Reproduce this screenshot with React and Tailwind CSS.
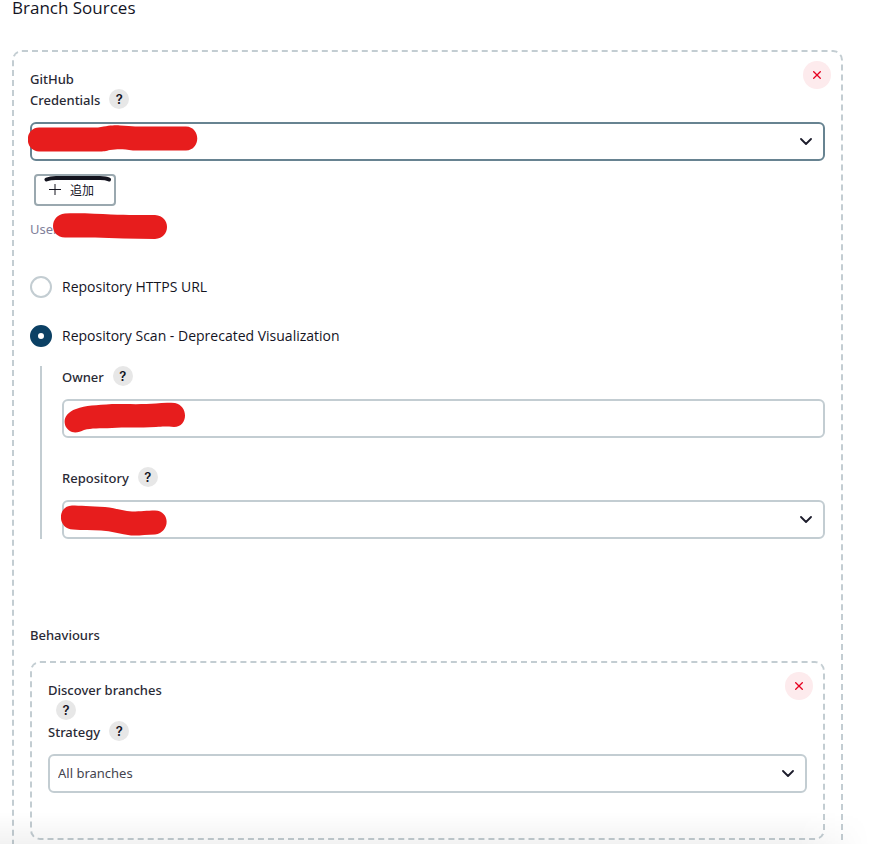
import React from "react";

const BOX = "relative rounded-[10px] border-2 border-dashed border-[#c3cdd2]";
const FIELD =
  "block h-[39px] w-full appearance-none rounded-md border-2 bg-white px-2 text-[13px] font-normal text-[#44444f] outline-none";

function Help({ topic }) {
  return (
    <button
      type="button"
      aria-label={`Help for ${topic}`}
      className="flex size-5 shrink-0 items-center justify-center rounded-full bg-[#e7e7e7] font-['Inter',sans-serif] text-[13px] leading-5 font-semibold text-[#14141f]"
    >
      ?
    </button>
  );
}

function Label({ htmlFor, children }) {
  return (
    <div className="-mt-px flex h-[22px] items-start gap-[9px]">
      <label htmlFor={htmlFor} className="leading-[23px]">
        {children}
      </label>
      <Help topic={children} />
    </div>
  );
}

function Remove({ label }) {
  return (
    <button
      type="button"
      aria-label={label}
      className="absolute top-[9px] right-[10px] flex size-7 items-center justify-center rounded-full bg-[#fdebed] text-[#e6001f]"
    >
      <svg viewBox="0 0 8 8" className="size-2" fill="none" stroke="currentColor" strokeWidth="1.3">
        <path d="M0.3 0.3 7.7 7.7M7.7 0.3 0.3 7.7" />
      </svg>
    </button>
  );
}

function Select({ id, border, children, value }) {
  return (
    <div className="relative">
      <select id={id} defaultValue={value} className={`${FIELD} ${border}`}>
        <option value={value}>{value}</option>
      </select>
      <svg
        viewBox="0 0 12 8"
        className="pointer-events-none absolute top-4 right-[13px] h-2 w-3"
        fill="none"
        stroke="#1c1c2b"
        strokeWidth="1.8"
        strokeLinecap="round"
        strokeLinejoin="round"
      >
        <path d="M1 1 6 6 11 1" />
      </svg>
      {children}
    </div>
  );
}

function Scribble({ d, className }) {
  return (
    <svg
      viewBox="0 0 180 40"
      className={`pointer-events-none absolute h-10 w-[180px] ${className}`}
      fill="#e71d1d"
      aria-hidden="true"
    >
      <path d={d} />
    </svg>
  );
}

const RADIO =
  "size-[22px] shrink-0 appearance-none rounded-full border-2 border-[#c3cdd2] bg-white checked:border-8 checked:border-[#0b4064]";
const RADIO_LABEL = "font-['Open_Sans',sans-serif] text-sm font-normal text-[#14141f]";

export default function App() {
  return (
    <main className="relative h-screen overflow-hidden bg-white pr-[45px] pl-3 font-['Noto_Sans','Noto_Sans_CJK_JP',sans-serif] text-[13px] font-medium text-[#2a2a35]">
      <h1 className="mb-[34px] font-['Open_Sans',sans-serif] text-[17px] leading-4 font-medium text-[#14141f]">
        Branch Sources
      </h1>

      <section className={`${BOX} px-4 pt-[17px] pb-12`}>
        <Remove label="Remove GitHub source" />
        <h2 className="leading-[21px]">GitHub</h2>
        <Label htmlFor="credentials">Credentials</Label>
        <div className="mt-[11px]">
          <Select id="credentials" border="border-[#678391]" value="">
            <Scribble
              className="top-0 left-[-2px]"
              d="M11 5.5H70C80 4 85 3 92 3.5C105 4.5 110 4.500 120 4.500H158C173 5 173 28 158 28.500H105C95 27 90 27 82 28C78 29 76 29.500 70 29.500H11C-4 29-4 6 11 5.500Z"
            />
          </Select>
        </div>

        <button
          type="button"
          className="relative mt-[13px] ml-1 flex h-8 w-[82px] items-center gap-[9px] rounded border-2 border-[#9aa8af] pl-[13px] font-['Noto_Sans_CJK_JP',sans-serif] text-xs font-normal text-[#14141f]"
        >
          <svg viewBox="0 0 12 12" className="size-3" stroke="currentColor" strokeWidth="1">
            <path d="M0 5.500H12M6 0V11" />
          </svg>
          追加
          <svg
            viewBox="0 0 68 8"
            className="absolute top-[-1px] left-[8px] h-2 w-[68px]"
            fill="none"
            stroke="#14141f"
            strokeWidth="4"
            strokeLinecap="round"
            aria-hidden="true"
          >
            <path d="M2.500 4.500C5 3.500 8 3 12 3H56C60 3 63 3.500 65 4.500" />
          </svg>
        </button>

        <p className="relative mt-[13px] text-[13px] leading-[21px] font-normal text-[#80809a]">
          User
          <Scribble
            className="top-[-6px] left-[23px]"
            d="M12 0.500C30 0 45 1 58 1.500C75 2 90 2 102 2C118 3 118 25 102 26C80 26 60 25 42 24.500H12C-4 24-4 2 12 0.500Z"
          />
        </p>

        <fieldset className="mt-9">
          <div className="flex h-[22px] items-center gap-[10px]">
            <input id="https-url" type="radio" name="repository-mode" className={RADIO} />
            <label htmlFor="https-url" className={RADIO_LABEL}>
              Repository HTTPS URL
            </label>
          </div>
          <div className="mt-[27px] flex h-[22px] items-center gap-[10px]">
            <input id="scan" type="radio" name="repository-mode" defaultChecked className={RADIO} />
            <label htmlFor="scan" className={RADIO_LABEL}>
              Repository Scan - Deprecated Visualization
            </label>
          </div>

          <div className="mt-[19px] ml-[10px] border-l-2 border-[#c3cdd2] pt-px pl-5">
            <Label htmlFor="owner">Owner</Label>
            <div className="relative mt-[11px]">
              <input id="owner" type="text" className={`${FIELD} border-[#c3cdd2]`} />
              <Scribble
                className="top-[3px] left-[2px]"
                d="M12 7C22 3 32 3.500 48 2C65 2 80 2.500 92 1.500C98 0.500 105 0.500 111 1C125 4 124 25 110 25C104 24.500 100 24 92 25C75 26 60 25 48 26C35 26.500 28 26 20 28C16 30 12 31 8 30C-2 26-3 12 12 7Z"
              />
            </div>
            <div className="mt-[30px]">
              <Label htmlFor="repository">Repository</Label>
            </div>
            <div className="mt-[11px]">
              <Select id="repository" border="border-[#c3cdd2]" value="">
                <Scribble
                  className="top-[5px] left-[-1px]"
                  d="M11 0.500C18 0.500 30 1.500 44 2C54 3 62 6 71 6.500C80 6.500 86 5.500 94 5.500C110 6 109 28 94 29.500C85 29.500 78 31 70 30.500C60 29.500 50 26 40 25.500C30 25 22 25.500 12 24.500C-4 24-4 1 11 0.500Z"
                />
              </Select>
            </div>
          </div>
        </fieldset>

        <h2 className="mt-[86px] leading-[21px]">Behaviours</h2>

        <section className={`${BOX} mt-[15px] px-4 pt-[17px] pb-[45px]`}>
          <Remove label="Remove Discover branches" />
          <h3 className="leading-[21px]">Discover branches</h3>
          <div className="-mt-px h-[21px] pl-2">
            <Help topic="Discover branches" />
          </div>
          <div className="mt-px">
            <Label htmlFor="strategy">Strategy</Label>
          </div>
          <div className="mt-[11px]">
            <Select id="strategy" border="border-[#c3cdd2]" value="All branches" />
          </div>
        </section>
      </section>

      <div className="pointer-events-none absolute inset-x-0 bottom-px h-8 bg-linear-to-b from-transparent to-black/5 mask-r-from-90% mask-r-to-98%" />
      <div className="absolute inset-x-0 bottom-0 h-px bg-white" />
    </main>
  );
}
